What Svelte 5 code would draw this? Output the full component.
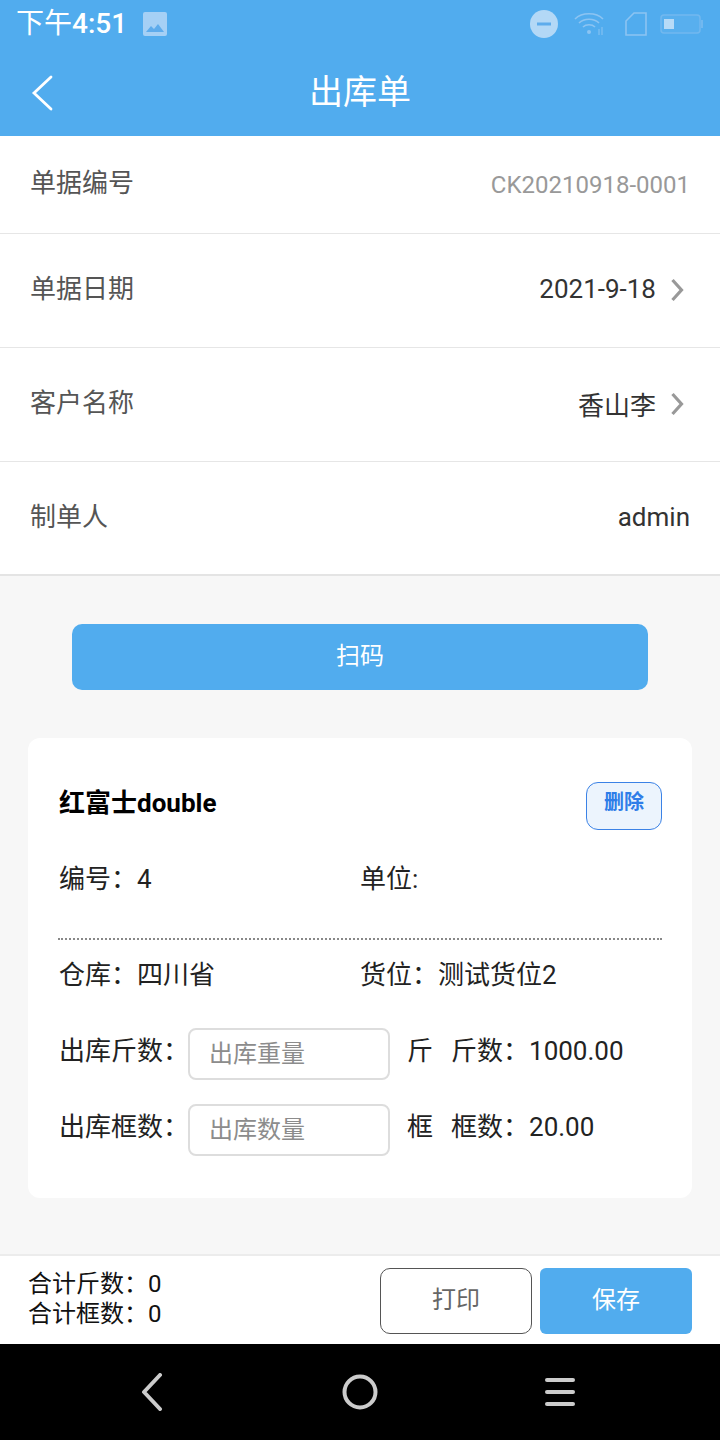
<script>
const formRows = [
    { label: "单据编号", value: "CK20210918-0001", kind: "muted", height: 98 },
    { label: "单据日期", value: "2021-9-18", kind: "date", arrow: true, height: 114 },
    { label: "客户名称", value: "香山李", arrow: true, height: 114 },
    { label: "制单人", value: "admin", height: 112 }
]
// fullwidth colon, the labels below all use it
const colon = "\uFF1A"
const inputRows = [
    { label: "出库斤数", placeholder: "出库重量", unit: "斤", stock: "斤数", amount: "1000.00" },
    { label: "出库框数", placeholder: "出库数量", unit: "框", stock: "框数", amount: "20.00" }
]
</script>

<div class="page">
    <header>
        <div class="status">
            <span class="time">下午<b>4:51</b></span>
            <svg class="pic" width="24" height="24" viewBox="0 0 24 24">
                <rect width="24" height="24" rx="2" fill="#a5d0f5" />
                <path d="M3 20l5-6 3 3 4-5 6 8z" fill="#5eacec" />
            </svg>
            <div class="status-right">
                <svg class="dnd" width="30" height="30" viewBox="0 0 30 30">
                    <circle cx="15" cy="15" r="14" fill="#b3d8f6" />
                    <rect x="8" y="13.5" width="14" height="3" fill="#5eacec" />
                </svg>
                <svg class="wifi" width="32" height="26" viewBox="0 0 32 26" fill="none" stroke="#8cc4f2" stroke-width="1.6">
                    <path d="M2 8C9 1 23 1 30 8M6 12c5-5 15-5 20 0M10 16c3-3 9-3 12 0" />
                    <circle cx="16" cy="21" r="2" fill="#8cc4f2" stroke="none" />
                    <path d="M26 18v6M29 16v8" stroke-width="1" />
                </svg>
                <svg class="sim" width="22" height="24" viewBox="0 0 22 24" fill="none" stroke="#8cc4f2" stroke-width="1.6">
                    <path d="M9 1h12v22H1V9z" />
                </svg>
                <svg class="battery" width="44" height="20" viewBox="0 0 44 20">
                    <rect x="1" y="1" width="39" height="18" rx="3" fill="#58afee" stroke="#72b8ef" stroke-width="1.5" />
                    <rect x="4" y="5" width="10" height="10" fill="#b8dbf7" />
                    <rect x="41" y="6" width="2" height="8" fill="#72b8ef" />
                </svg>
            </div>
        </div>
        <div class="titlebar">
            <svg class="back" width="24" height="36" viewBox="0 0 24 36" fill="none" stroke="#fff" stroke-width="2.8" stroke-linecap="round">
                <path d="M20 2L3 18l17 16" />
            </svg>
            <h1>出库单</h1>
        </div>
    </header>

    <section class="form">
        {#each formRows as row}
            <div class="row" style="height: {row.height}px">
                <span class="label">{row.label}</span>
                <span class="value {row.kind ?? ''}">{row.value}</span>
                {#if row.arrow}
                    <svg class="chevron" width="14" height="24" viewBox="0 0 14 24" fill="none" stroke="#999" stroke-width="3.2">
                        <path d="M2.5 2L11.5 12 2.5 22" />
                    </svg>
                {/if}
            </div>
        {/each}
    </section>

    <main>
        <button class="scan">扫码</button>

        <div class="card">
            <div class="card-head">
                <span class="name">红富士double</span>
                <button class="del">删除</button>
            </div>
            <div class="pair info">
                <span>编号{colon}4</span>
                <span>单位:</span>
            </div>
            <div class="dots"></div>
            <div class="pair place">
                <span>仓库{colon}四川省</span>
                <span>货位{colon}测试货位2</span>
            </div>
            {#each inputRows as item}
                <div class="entry">
                    <span class="entry-label">{item.label}{colon}</span>
                    <input placeholder={item.placeholder} />
                    <span class="unit">{item.unit}</span>
                    <span class="stock">{item.stock}{colon}{item.amount}</span>
                </div>
            {/each}
        </div>
    </main>

    <footer>
        <div class="totals">
            <div>合计斤数{colon}0</div>
            <div>合计框数{colon}0</div>
        </div>
        <button class="print">打印</button>
        <button class="save">保存</button>
    </footer>

    <nav>
        <svg width="24" height="38" viewBox="0 0 24 38" fill="none" stroke="#ccc" stroke-width="4" stroke-linecap="round" stroke-linejoin="round">
            <path d="M20 2L4 19l16 17" />
        </svg>
        <svg width="36" height="36" viewBox="0 0 36 36" fill="none" stroke="#ccc" stroke-width="4">
            <circle cx="18" cy="18" r="15.5" />
        </svg>
        <svg width="30" height="28" viewBox="0 0 30 28" fill="#ccc">
            <rect y="0" width="30" height="4" rx="2" />
            <rect y="12" width="30" height="4" rx="2" />
            <rect y="24" width="30" height="4" rx="2" />
        </svg>
    </nav>
</div>

<style>
:global(body) {
    margin: 0;
    background: #f7f7f7;
}
.page {
    width: 720px;
    height: 1440px;
    display: flex;
    flex-direction: column;
    overflow: hidden;
    font-family: Roboto, "Noto Sans CJK SC", sans-serif;
    color: #222;
}
header {
    height: 136px;
    background: #51acee;
    color: #fff;
    flex: none;
}
.status {
    height: 48px;
    display: flex;
    align-items: center;
    padding: 0 16px;
}
.time {
    font-size: 28px;
    line-height: 48px;
}
.time b {
    font-weight: 500;
}
.pic {
    margin-left: 16px;
}
.status-right {
    margin-left: auto;
    display: flex;
    align-items: center;
}
.wifi {
    margin-left: 14px;
}
.sim {
    margin-left: 20px;
}
.battery {
    margin-left: 13px;
}
.titlebar {
    position: relative;
    height: 88px;
    display: flex;
    align-items: center;
    justify-content: center;
}
.titlebar h1 {
    margin: 0 0 6px;
    font-size: 34px;
    font-weight: 400;
}
.back {
    position: absolute;
    left: 31px;
    top: 27px;
}
.form {
    background: #fff;
    border-bottom: 2px solid #e4e4e4;
    flex: none;
}
.row {
    display: flex;
    align-items: center;
    padding: 0 30px;
    box-sizing: border-box;
    border-bottom: 1px solid #e6e6e6;
}
.row:last-child {
    border-bottom: none;
}
.label {
    font-size: 26px;
    color: #555;
    margin-right: auto;
    padding-bottom: 8px;
}
.value {
    font-size: 26px;
    color: #333;
    padding-bottom: 2px;
}
.value.date {
    padding-bottom: 4px;
}
.value.muted {
    font-size: 24px;
    color: #999;
    padding-bottom: 0;
}
.chevron {
    margin-left: 14px;
    margin-right: 6px;
    margin-bottom: 2px;
}
main {
    flex: 1;
    display: flex;
    flex-direction: column;
    padding: 48px 28px 0;
}
button {
    font-family: inherit;
    padding: 0;
}
.scan {
    align-self: center;
    width: 576px;
    height: 66px;
    border: none;
    border-radius: 10px;
    background: #51acee;
    color: #fff;
    font-size: 24px;
    padding-bottom: 8px;
}
.card {
    margin-top: 48px;
    height: 460px;
    box-sizing: border-box;
    background: #fff;
    border-radius: 12px;
    padding: 44px 30px 0 31px;
    font-size: 26px;
    color: #222;
}
.card-head {
    display: flex;
    justify-content: space-between;
    height: 48px;
}
.name {
    font-weight: 700;
    color: #000;
    line-height: 42px;
}
.del {
    width: 76px;
    height: 48px;
    box-sizing: border-box;
    border: 1px solid #3b82e6;
    border-radius: 12px;
    background: #ecf4fd;
    color: #2f7de8;
    font-size: 20px;
    font-weight: 700;
    padding-bottom: 12px;
}
.pair {
    display: grid;
    grid-template-columns: 301px 1fr;
    line-height: 38px;
}
.info {
    margin-top: 22px;
    height: 78px;
    padding-top: 8px;
}
.dots {
    border-top: 2px dotted #888;
    margin-left: -1px;
}
.place {
    margin-top: 16px;
}
.entry {
    display: flex;
    align-items: center;
    height: 52px;
    margin-top: 24px;
}
.place + .entry {
    margin-top: 34px;
}
.entry-label {
    width: 129px;
    flex: none;
    padding-bottom: 12px;
    white-space: nowrap;
}
input {
    width: 202px;
    height: 52px;
    box-sizing: border-box;
    border: 2px solid #ddd;
    border-radius: 8px;
    padding: 0 19px;
    font-family: inherit;
    font-size: 24px;
    background: #fff;
    outline: none;
}
input::placeholder {
    color: #8c8c8c;
}
.unit {
    margin: 0 18px 0 17px;
    padding-bottom: 12px;
}
.stock {
    padding-bottom: 12px;
}
footer {
    flex: none;
    height: 90px;
    box-sizing: border-box;
    background: #fff;
    border-top: 2px solid #ececec;
    display: flex;
    align-items: center;
    padding: 2px 28px 0;
}
.totals {
    margin-right: auto;
    font-size: 24px;
    line-height: 30px;
    color: #111;
    padding-bottom: 4px;
}
.print, .save {
    width: 152px;
    height: 66px;
    font-size: 24px;
    box-sizing: border-box;
    padding-bottom: 8px;
}
.print {
    border: 1px solid #555;
    border-radius: 10px;
    background: #fff;
    color: #666;
    margin-right: 8px;
}
.save {
    border: none;
    border-radius: 6px;
    background: #51acee;
    color: #fff;
}
nav {
    flex: none;
    height: 96px;
    background: #000;
    display: grid;
    grid-template-columns: 304px 112px 304px;
    align-items: center;
    justify-items: center;
}
nav svg:first-child {
    justify-self: end;
    margin-right: 140px;
}
nav svg:last-child {
    justify-self: start;
    margin-left: 129px;
}
</style>
